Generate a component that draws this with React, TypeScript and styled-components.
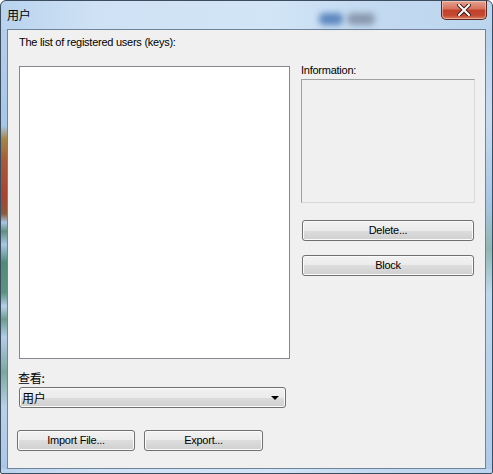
import React from 'react';
import styled, { createGlobalStyle } from 'styled-components';

const GlobalStyle = createGlobalStyle`
  html, body {
    margin: 0;
    padding: 0;
    background: #ffffff;
  }
  * {
    box-sizing: border-box;
  }
`;

const uiFont = `"Liberation Sans", "Noto Sans CJK SC", sans-serif`;

const Window = styled.div`
  position: relative;
  width: 493px;
  height: 474px;
  border: 1px solid #3c4d60;
  border-radius: 6px 6px 2px 2px;
  background: linear-gradient(to right, #b9d3ee 0%, #cfe2f5 20%, #d2e5f7 55%, #c3daf1 75%, #bcd5ee 100%);
  padding: 0 6px 4px 6px;
  display: flex;
  flex-direction: column;
  overflow: hidden;
  font-family: ${uiFont};
  font-size: 11px;
  letter-spacing: -0.25px;
  color: #000;
`;

const SideGlow = styled.div<{ side: 'left' | 'right' }>`
  position: absolute;
  top: 28px;
  bottom: 4px;
  ${({ side }) => (side === 'left' ? 'left: 0;' : 'right: 0;')}
  width: 6px;
  background: ${({ side }) =>
    side === 'left'
      ? 'linear-gradient(to bottom, #b4cfeb 0%, #a8c6e6 22%, #a48646 25%, #a85a38 30%, #a8422f 38%, #8a5a3a 42%, #a9c6e4 44%, #5e8f80 46%, #a9c6e4 49%, #4f8a78 53%, #5b9382 60%, #b6d0ea 63%, #6b9c8c 66%, #b3cde8 70%, #7ca89b 78%, #b8d1ea 86%, #aac8e6 100%)'
      : 'linear-gradient(to bottom, #b8d2ec 0%, #c7dcf1 20%, #a7c5e3 40%, #8fb8b0 50%, #c0d8ee 60%, #aecbe8 100%)'};
`;

const TitleBar = styled.div`
  position: relative;
  height: 28px;
  display: flex;
  align-items: flex-start;
  justify-content: space-between;
`;

const Title = styled.div`
  margin-top: 7px;
  font-size: 12px;
  line-height: 14px;
  color: #000;
  font-family: "Noto Sans CJK SC", sans-serif;
`;

const Blur = styled.div<{ left: number; width: number; color: string }>`
  position: absolute;
  top: 12px;
  left: ${({ left }) => left}px;
  width: ${({ width }) => width}px;
  height: 12px;
  border-radius: 5px;
  background: ${({ color }) => color};
  filter: blur(3px);
  opacity: 0.85;
`;

const CloseButton = styled.div`
  width: 46px;
  height: 19px;
  margin-right: -1px;
  border: 1px solid #5a2a22;
  border-top: none;
  border-radius: 0 0 5px 5px;
  background: linear-gradient(to bottom, #e3a392 0%, #d6705a 45%, #c2402a 50%, #c44a32 80%, #d77b5e 100%);
  box-shadow: inset 0 0 0 1px rgba(255, 220, 210, 0.5);
  display: flex;
  align-items: center;
  justify-content: center;
`;

const Client = styled.div`
  flex: 1;
  border: 1px solid #6f849b;
  background: #f0f0f0;
  padding: 6px 0 0 11px;
  display: flex;
  flex-direction: column;
`;

const Label = styled.div`
  height: 13px;
  line-height: 13px;
  white-space: nowrap;
`;

const Main = styled.div`
  margin-top: 17px;
  display: flex;
  gap: 11px;
`;

const LeftColumn = styled.div`
  width: 271px;
  display: flex;
  flex-direction: column;
`;

const RightColumn = styled.div`
  width: 174px;
  display: flex;
  flex-direction: column;
`;

const ListBox = styled.div`
  height: 293px;
  background: #ffffff;
  border: 1px solid #828790;
`;

const ViewLabel = styled(Label)`
  margin-top: 12px;
  font-family: "Noto Sans CJK SC", sans-serif;
  font-size: 12px;
  margin-left: -1px;
`;

const Combo = styled.div`
  margin-top: 3px;
  width: 267px;
  height: 21px;
  border: 1px solid #707070;
  border-radius: 3px;
  background: linear-gradient(to bottom, #f2f2f2 0%, #ebebeb 50%, #dddddd 50%, #cfcfcf 100%);
  box-shadow: inset 0 0 0 1px #fbfbfb;
  display: flex;
  align-items: center;
  justify-content: space-between;
  padding: 0 6px 0 2px;
  font-family: "Noto Sans CJK SC", sans-serif;
  font-size: 12px;
`;

const Arrow = styled.div`
  width: 0;
  height: 0;
  border-left: 4px solid transparent;
  border-right: 4px solid transparent;
  border-top: 4px solid #000;
`;

const ButtonRow = styled.div`
  margin-top: 22px;
  margin-left: -2px;
  display: flex;
  gap: 9px;
`;

const Button = styled.div<{ width: number }>`
  width: ${({ width }) => width}px;
  height: 21px;
  border: 1px solid #707070;
  border-radius: 3px;
  background: linear-gradient(to bottom, #f2f2f2 0%, #ebebeb 50%, #dddddd 50%, #cfcfcf 100%);
  box-shadow: inset 0 0 0 1px #fbfbfb;
  display: flex;
  align-items: center;
  justify-content: center;
  line-height: 13px;
`;

const InfoLabel = styled(Label)`
  margin-top: -2px;
`;

const InfoBox = styled.div`
  margin-top: 2px;
  height: 124px;
  border: 1px solid #a0a0a0;
  border-right-color: #d8d8d8;
  border-bottom-color: #d8d8d8;
  background: #f0f0f0;
`;

const SideButton = styled(Button)<{ gapTop: number }>`
  margin-top: ${({ gapTop }) => gapTop}px;
  margin-left: 1px;
  height: 21px;
`;

const App: React.FC = () => {
  return (
    <>
      <GlobalStyle />
      <Window>
        <SideGlow side="left" />
        <SideGlow side="right" />
        <TitleBar>
          <Blur left={312} width={24} color="#4a77b4" />
          <Blur left={340} width={28} color="#7f8ea3" />
          <Title>用户</Title>
          <CloseButton>
            <svg width="14" height="12" viewBox="0 0 14 12">
              <path
                d="M2 1 L12 11 M12 1 L2 11"
                stroke="#3a1c18"
                strokeWidth="4"
                strokeLinecap="square"
              />
              <path
                d="M2 1 L12 11 M12 1 L2 11"
                stroke="#ffffff"
                strokeWidth="2"
                strokeLinecap="square"
              />
            </svg>
          </CloseButton>
        </TitleBar>
        <Client>
          <Label>The list of registered users (keys):</Label>
          <Main>
            <LeftColumn>
              <ListBox />
              <ViewLabel>查看:</ViewLabel>
              <Combo>
                <span>用户</span>
                <Arrow />
              </Combo>
              <ButtonRow>
                <Button width={118}>Import File...</Button>
                <Button width={119}>Export...</Button>
              </ButtonRow>
            </LeftColumn>
            <RightColumn>
              <InfoLabel>Information:</InfoLabel>
              <InfoBox />
              <SideButton width={172} gapTop={17}>Delete...</SideButton>
              <SideButton width={172} gapTop={14}>Block</SideButton>
            </RightColumn>
          </Main>
        </Client>
      </Window>
    </>
  );
};

export default App;
